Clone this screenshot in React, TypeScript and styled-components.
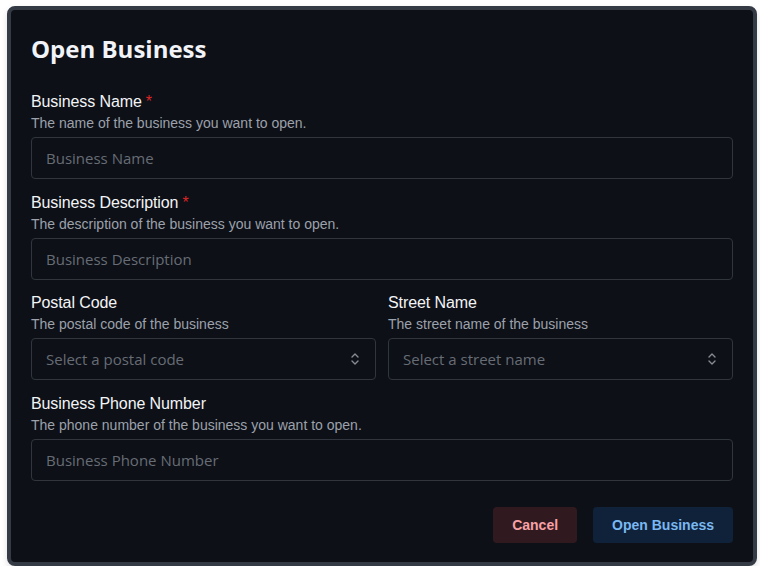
import styled, { createGlobalStyle } from 'styled-components';

const GlobalStyle = createGlobalStyle`
  html, body {
    margin: 0;
    padding: 0;
    background: #ffffff;
  }
  * {
    box-sizing: border-box;
  }
`;

const Page = styled.div`
  padding: 6px 3px 0 7px;
`;

const Modal = styled.form`
  width: 750px;
  height: 560px;
  background: #0d1017;
  border: 4px solid #353b45;
  border-radius: 8px;
  padding: 21px 20px 19px;
  display: flex;
  flex-direction: column;
  box-shadow: 0 3px 6px rgba(0, 0, 0, 0.12);
`;

const Title = styled.h2`
  margin: 0 0 25px;
  font-family: 'Open Sans', 'Noto Sans', sans-serif;
  font-size: 24px;
  line-height: 36px;
  font-weight: 700;
  color: #f1f3f8;
`;

const Field = styled.div`
  display: flex;
  flex-direction: column;
  margin-bottom: 13.5px;
  min-width: 0;
`;

const Row = styled.div`
  display: grid;
  grid-template-columns: 1fr 1fr;
  gap: 12px;
`;

const Label = styled.label`
  font-family: 'Liberation Sans', Arial, sans-serif;
  font-size: 16px;
  line-height: 20px;
  color: #f3f4f6;
  letter-spacing: -0.1px;
`;

const Required = styled.span`
  color: #dc2626;
  margin-left: 4px;
`;

const Hint = styled.div`
  margin-top: 2px;
  font-family: 'Liberation Sans', Arial, sans-serif;
  font-size: 14px;
  line-height: 18px;
  color: #9ca1ab;
`;

const Control = styled.div`
  position: relative;
  margin-top: 5px;
  height: 42px;
`;

const Input = styled.input`
  width: 100%;
  height: 100%;
  background: transparent;
  border: 1px solid #30353e;
  border-radius: 4px;
  padding: 0 40px 0 14px;
  font-family: 'Open Sans', 'Noto Sans', sans-serif;
  font-size: 15px;
  color: #e5e7eb;
  outline: none;

  &::placeholder {
    color: #676c75;
  }
`;

const Chevron = styled.span`
  position: absolute;
  right: 16px;
  top: 50%;
  transform: translateY(-50%);
  display: flex;
  color: #868b94;
`;

const Actions = styled.div`
  margin-top: auto;
  display: flex;
  justify-content: flex-end;
  gap: 16px;
`;

const Button = styled.button<{ tone: 'danger' | 'primary' }>`
  height: 36px;
  padding: 0 19px;
  border: none;
  border-radius: 4px;
  font-family: 'Liberation Sans', Arial, sans-serif;
  font-weight: 700;
  font-size: 14px;
  background: ${({ tone }) => (tone === 'danger' ? '#311a1f' : '#10223a')};
  color: ${({ tone }) => (tone === 'danger' ? '#f7a1a6' : '#79b8f1')};
  cursor: pointer;
`;

function UpDown() {
  return (
    <svg width="10" height="15" viewBox="0 0 10 15" fill="none" stroke="currentColor" strokeWidth="1.4" strokeLinecap="round" strokeLinejoin="round">
      <path d="M2 5.5 L5 2.5 L8 5.5" />
      <path d="M2 9.5 L5 12.5 L8 9.5" />
    </svg>
  );
}

export default function App() {
  return (
    <Page>
      <GlobalStyle />
      <Modal onSubmit={(e) => e.preventDefault()}>
        <Title>Open Business</Title>

        <Field>
          <Label>
            Business Name<Required>*</Required>
          </Label>
          <Hint>The name of the business you want to open.</Hint>
          <Control>
            <Input placeholder="Business Name" />
          </Control>
        </Field>

        <Field>
          <Label>
            Business Description<Required>*</Required>
          </Label>
          <Hint>The description of the business you want to open.</Hint>
          <Control>
            <Input placeholder="Business Description" />
          </Control>
        </Field>

        <Row>
          <Field>
            <Label>Postal Code</Label>
            <Hint>The postal code of the business</Hint>
            <Control>
              <Input placeholder="Select a postal code" readOnly />
              <Chevron>
                <UpDown />
              </Chevron>
            </Control>
          </Field>
          <Field>
            <Label>Street Name</Label>
            <Hint>The street name of the business</Hint>
            <Control>
              <Input placeholder="Select a street name" readOnly />
              <Chevron>
                <UpDown />
              </Chevron>
            </Control>
          </Field>
        </Row>

        <Field>
          <Label>Business Phone Number</Label>
          <Hint>The phone number of the business you want to open.</Hint>
          <Control>
            <Input placeholder="Business Phone Number" />
          </Control>
        </Field>

        <Actions>
          <Button type="button" tone="danger">
            Cancel
          </Button>
          <Button type="submit" tone="primary">
            Open Business
          </Button>
        </Actions>
      </Modal>
    </Page>
  );
}
